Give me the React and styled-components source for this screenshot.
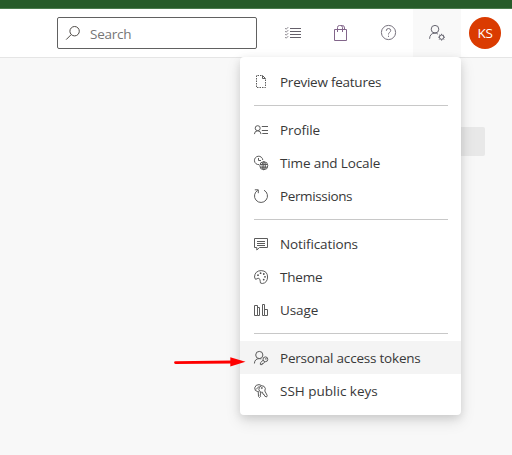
import React from 'react';
import styled, { createGlobalStyle } from 'styled-components';

const GlobalStyle = createGlobalStyle`
  * { box-sizing: border-box; }
  body {
    margin: 0;
    background: #f8f8f8;
    font-family: "Open Sans", "Noto Sans", sans-serif;
    color: #383838;
    overflow: hidden;
  }
  button { font: inherit; color: inherit; border: 0; padding: 0; background: none; }
`;

const Page = styled.div`
  position: relative;
  display: flex;
  flex-direction: column;
  width: 512px;
  height: 455px;
  overflow: hidden;
  background: #f8f8f8;
`;

const BrandBar = styled.div`
  height: 9px;
  flex: none;
  background: #275c2a;
  border-bottom: 1px solid #4b7d4e;
`;

const Header = styled.header`
  display: flex;
  align-items: center;
  flex: none;
  height: 49px;
  padding-left: 57px;
  background: #fff;
  border-bottom: 1px solid #e5e5e5;
`;

const SearchBox = styled.div`
  display: flex;
  align-items: center;
  width: 200px;
  height: 32px;
  margin-right: 12px;
  padding-left: 7px;
  gap: 9px;
  border: 1px solid #616161;
  border-radius: 2px;
  font-size: 13.5px;
  color: #767676;
`;

const SearchLabel = styled.span`
  line-height: 20px;
  padding-top: 1px;
  letter-spacing: -0.25px;
`;

const ToolButton = styled.button`
  display: flex;
  align-items: center;
  justify-content: center;
  width: 48px;
  height: 48px;
  background: ${(p) => (p.$active ? '#f9f9f9' : 'transparent')};
`;

const Avatar = styled.div`
  display: flex;
  align-items: center;
  justify-content: center;
  width: 32px;
  height: 32px;
  margin-left: 8px;
  border-radius: 50%;
  background: #da3b01;
  color: #fff;
  font-size: 13.5px;
  letter-spacing: -0.4px;
`;

const Content = styled.main`
  display: flex;
  justify-content: flex-end;
  padding: 69px 27px 0 0;
`;

const ContentTile = styled.div`
  width: 60px;
  height: 29px;
  border-radius: 2px;
  background: #e8e8e8;
`;

const Menu = styled.nav`
  position: absolute;
  left: 240px;
  top: 57px;
  width: 221px;
  padding: 8px 0;
  border-radius: 4px;
  background: #fff;
  box-shadow: 0 3px 8px rgba(0, 0, 0, 0.1), 0 6px 16px rgba(0, 0, 0, 0.11);
`;

const MenuItem = styled.a`
  display: flex;
  align-items: center;
  height: 33px;
  padding-left: 13px;
  gap: 11px;
  background: ${(p) => (p.$active ? '#f4f4f4' : 'transparent')};
`;

const ItemLabel = styled.span`
  font-size: 13.5px;
  line-height: 20px;
  padding-top: 1px;
  white-space: nowrap;
  letter-spacing: ${(p) => p.$spacing || 0}px;
`;

const Divider = styled.hr`
  height: 1px;
  margin: 7px 13px 7px 14px;
  border: 0;
  background: #c8c8c8;
`;

const Pointer = styled.svg`
  position: absolute;
  left: 172px;
  top: 354px;
`;

const Glyph = styled.svg`
  flex: none;
  fill: none;
  stroke: ${(p) => p.$color || '#5c5c5c'};
  stroke-width: 1;
`;

const icons = {
  search: (
    <>
      <circle cx="9.6" cy="6.2" r="4.7" />
      <path d="M6.2 9.6 L1.2 14.6" />
    </>
  ),
  tasks: (
    <>
      <path d="M6 4.5H17M6 7.5H17M6 10.5H17M6 13.5H17" />
      <path strokeWidth=".8" d="M1.2 4.2l1 1 2-2M1.2 7.2l1 1 2-2M1.2 10.2l1 1 2-2M1.2 13.2l1 1 2-2" />
    </>
  ),
  bag: (
    <>
      <path d="M2.5 5.5H14.5V16.5H2.5Z" />
      <path d="M5.5 8V3.5Q5.5 1.5 7.5 1.5H8.5Q10.5 1.5 10.5 3.5V8M8.5 1.5H10.5Q12.5 1.5 12.5 4V5.5" />
    </>
  ),
  help: (
    <>
      <circle cx="8.5" cy="8.5" r="7.1" />
      <path d="M6.3 6.8Q6.3 4.5 8.5 4.5Q10.7 4.5 10.7 6.6Q10.7 7.6 9.5 8.4Q8.5 9.1 8.5 10.5M8.5 11.7V12.9" />
    </>
  ),
  userGear: (
    <g transform="translate(1 .8)">
      <circle cx="6" cy="4.4" r="3.8" />
      <path d="M.6 14Q.8 8.4 6 8.3Q7.8 8.3 8.9 9.3" />
      <circle cx="12.6" cy="12.4" r="2.2" />
      <path d="M12.6 9V10.2M12.6 14.6V15.8M9.2 12.4H10.4M14.8 12.4H16M10.2 10L11.1 10.9M14.1 13.9L15 14.8M15 10L14.1 10.9M11.1 13.9L10.2 14.8" />
    </g>
  ),
  preview: (
    <>
      <path strokeDasharray="1.5 1" d="M8.5 1.5H3.5V13.5H12.5V5.5" />
      <path d="M9.5 1.5V4.5H12.5L9.5 1.5" />
    </>
  ),
  profile: (
    <>
      <circle cx="4.7" cy="6.2" r="2.5" />
      <path d="M1.4 12.1Q1.6 8.8 4.7 8.8Q7.8 8.8 8 12.1" />
      <path d="M8.8 4.5H15M8.8 8.5H15M9.3 11.5H15" />
    </>
  ),
  locale: (
    <>
      <path d="M6 9.6A4.2 4.2 0 1 1 9.8 5" />
      <path d="M5.5 3V5.5H8" />
      <circle cx="10.8" cy="10.7" r="4" />
      <ellipse cx="10.8" cy="10.7" rx="1.7" ry="4" />
      <path d="M7 9.5H14.6M7 12.2H14.6M10.8 6.7V14.7" />
    </>
  ),
  permissions: (
    <>
      <path d="M4.8 2.3A6.5 6.5 0 1 0 11 2.2" />
      <path d="M1.8 1.8H5.3V5.2" />
    </>
  ),
  notifications: (
    <path d="M1.5 2.5H14.5V11.5H6.5L3.8 14V11.5H1.5ZM4 5.5H12M4 7.5H12M4 9.5H12" />
  ),
  theme: (
    <>
      <path d="M1.5 8Q1.8 1.8 8.2 1.6Q14.5 1.9 14.6 8Q14.3 14 9.3 14.5Q6.7 14.7 7.2 12.2Q7.4 10 5.8 9.4Q4.8 9 4 9.9Q2 11.5 1.5 8Z" />
      <g fill="#4d4d4d" stroke="none">
        <circle cx="5" cy="6.2" r=".9" />
        <circle cx="7.6" cy="4.2" r=".9" />
        <circle cx="10.8" cy="5" r=".9" />
        <circle cx="12" cy="7.8" r=".9" />
        <circle cx="10.7" cy="10.6" r=".9" />
      </g>
    </>
  ),
  usage: (
    <path d="M1.5 3.5H4.5V13.5H1.5ZM4.5 5.5H6.5V13.5H4.5M9.5 2.5H11.5V13.5H9.5ZM11.5 7.5H14.5V13.5H11.5" />
  ),
  token: (
    <>
      <circle cx="6.3" cy="5" r="3.6" />
      <path d="M1.4 13.5Q1.6 8.8 6.3 8.6Q7.3 8.6 8.2 9" />
      <circle cx="12.4" cy="9.3" r="2.4" />
      <path d="M10.2 10.1L7.4 12.8V14.6H9.2V13.5H10.4L11.8 11.8" />
      <circle cx="12.9" cy="8.9" r=".4" />
    </>
  ),
  keys: (
    <>
      <path d="M4.8 8.6Q1.4 8.2 1.7 4.8Q2.5 1.5 6 1.6L8.5 2.5M3 6.5L6.3 3.2M5.2 8L5.5 13.5L6.5 14.5L7.6 13.3L7 12L7.8 11L7.2 9" />
      <path d="M7.2 8.8Q4.9 7 6.4 4.2Q8.2 1.7 11 3.3Q13.3 5.2 11.8 8L14.2 12.4L13.6 14L11.8 13.2L11.2 11.6L10 11.2L9.5 9.2Q8.2 9.5 7.2 8.8Z" />
      <circle cx="8.8" cy="5" r=".6" />
    </>
  ),
};

const Icon = ({ name, size = 16, color }) => (
  <Glyph $color={color} width={size} height={size} viewBox={`0 0 ${size} ${size}`} aria-hidden="true">
    {icons[name]}
  </Glyph>
);

const tools = [
  { icon: 'tasks', label: 'Work items', color: '#65606a' },
  { icon: 'bag', label: 'Marketplace', color: '#82658a' },
  { icon: 'help', label: 'Help', color: '#77727e' },
  { icon: 'userGear', label: 'User settings', color: '#666570', active: true },
];

const groups = [
  [{ icon: 'preview', label: 'Preview features', spacing: -0.25 }],
  [
    { icon: 'profile', label: 'Profile', spacing: -0.1 },
    { icon: 'locale', label: 'Time and Locale', spacing: -0.13 },
    { icon: 'permissions', label: 'Permissions', spacing: -0.37 },
  ],
  [
    { icon: 'notifications', label: 'Notifications', spacing: -0.12 },
    { icon: 'theme', label: 'Theme', spacing: -0.2 },
    { icon: 'usage', label: 'Usage', spacing: -0.1 },
  ],
  [
    { icon: 'token', label: 'Personal access tokens', spacing: -0.21, active: true },
    { icon: 'keys', label: 'SSH public keys' },
  ],
];

export default function App() {
  return (
    <Page>
      <GlobalStyle />
      <BrandBar />
      <Header>
        <SearchBox>
          <Icon name="search" color="#4e4a46" />
          <SearchLabel>Search</SearchLabel>
        </SearchBox>
        {tools.map((t) => (
          <ToolButton key={t.icon} $active={t.active} aria-label={t.label}>
            <Icon name={t.icon} size={18} color={t.color} />
          </ToolButton>
        ))}
        <Avatar>KS</Avatar>
      </Header>
      <Content>
        <ContentTile />
      </Content>
      <Menu>
        {groups.map((items, i) => (
          <React.Fragment key={items[0].icon}>
            {i > 0 && <Divider />}
            {items.map((item) => (
              <MenuItem key={item.icon} $active={item.active}>
                <Icon name={item.icon} />
                <ItemLabel $spacing={item.spacing}>{item.label}</ItemLabel>
              </MenuItem>
            ))}
          </React.Fragment>
        ))}
      </Menu>
      <Pointer width="75" height="16" viewBox="0 0 75 16" aria-hidden="true">
        <path d="M3.5 8.6L60 8" stroke="#fe0000" strokeWidth="2.8" strokeLinecap="round" />
        <path d="M58.3 3.3L73.5 7.7L58.3 12.6Z" fill="#fe0000" />
      </Pointer>
    </Page>
  );
}
